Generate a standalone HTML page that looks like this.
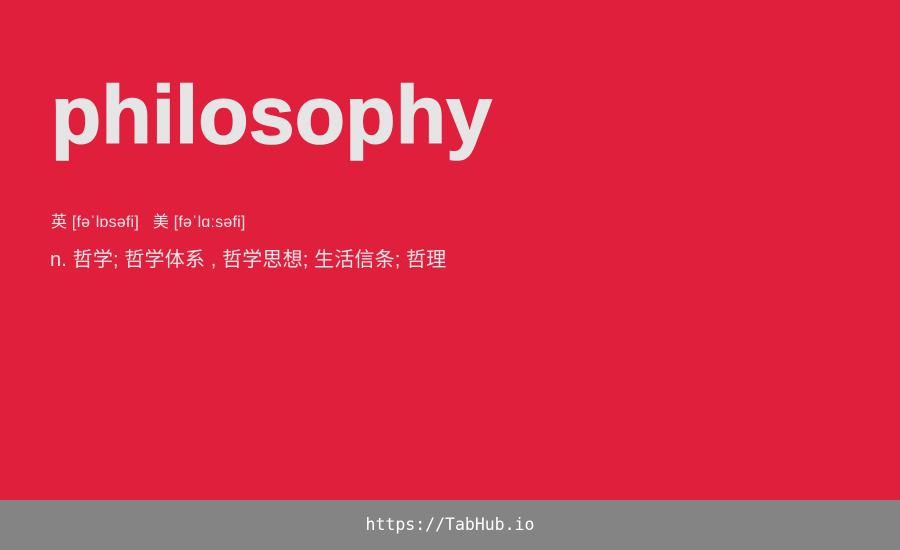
<!DOCTYPE html>
<html><head><meta charset="utf-8"><style>
html,body{margin:0;padding:0}
body{width:900px;height:550px;background:#e01f3d;position:relative;overflow:hidden;font-family:"Liberation Sans","Noto Sans CJK SC",sans-serif;color:#e6e6e6}
.t{position:absolute;left:51px;top:61px;font-size:82px;font-weight:bold;line-height:110px;color:#e5e5e5;letter-spacing:0.4px;-webkit-text-stroke:1.6px #e5e5e5}
.p{position:absolute;left:51px;top:213px;font-size:16px;line-height:20px;letter-spacing:0.2px}
.m{position:absolute;left:50px;top:248px;font-size:20px;line-height:24px;letter-spacing:0.15px}
.f{position:absolute;left:0;top:500px;width:900px;height:50px;background:#848484;color:#fff;font-family:"DejaVu Sans Mono","Liberation Mono",monospace;font-size:16.5px;line-height:50px;text-align:center}
</style></head><body>
<div class="t">philosophy</div>
<div class="p">英 [fəˈlɒsəfi] &nbsp;&nbsp;美 [fəˈlɑːsəfi]</div>
<div class="m">n. 哲学; 哲学体系 , 哲学思想; 生活信条; 哲理</div>
<div class="f">https://TabHub.io</div>
</body></html>
